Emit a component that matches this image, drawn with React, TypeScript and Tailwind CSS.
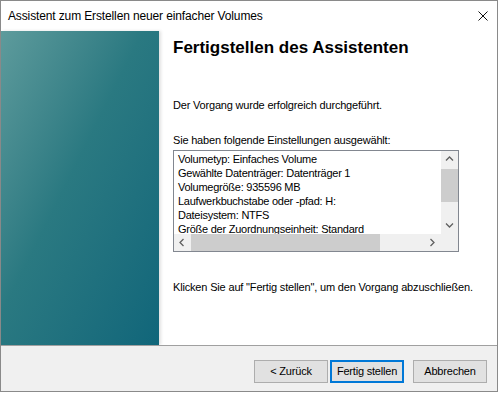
const settings = [
  'Volumetyp: Einfaches Volume',
  'Gewählte Datenträger: Datenträger 1',
  'Volumegröße: 935596 MB',
  'Laufwerkbuchstabe oder -pfad: H:',
  'Dateisystem: NTFS',
  'Größe der Zuordnungseinheit: Standard',
  'Volumebezeichnung: Volume',
];

function Chevron({ dir }: { dir: 'up' | 'down' | 'left' | 'right' }) {
  const paths: Record<string, string> = {
    up: 'M1 5.5 L4.5 2 L8 5.5',
    down: 'M1 2.5 L4.5 6 L8 2.5',
    left: 'M5.5 1 L2 4.5 L5.5 8',
    right: 'M2.5 1 L6 4.5 L2.5 8',
  };
  return (
    <svg width="9" height="9" viewBox="0 0 9 9">
      <path d={paths[dir]} fill="none" stroke="#606060" strokeWidth="1.3" />
    </svg>
  );
}

function Button({ label, primary }: { label: string; primary?: boolean }) {
  return (
    <div
      className={
        'w-[74px] h-[23px] flex items-center justify-center bg-[#e1e1e1] text-[11px] tracking-[-0.2px] text-black ' +
        (primary ? 'border-2 border-[#0078d7]' : 'border border-[#adadad]')
      }
    >
      {label}
    </div>
  );
}

export default function App() {
  return (
    <div className="w-[499px] h-[393px] bg-white font-['Liberation_Sans',Arial,sans-serif] text-black">
      <div className="w-[498px] h-[392px] border border-[#8a8a8a] flex flex-col bg-white">
        {/* title bar */}
        <div className="h-[30px] flex items-center justify-between pl-[7px] pr-[9px] shrink-0">
          <span className="text-[12px] tracking-[-0.13px]">Assistent zum Erstellen neuer einfacher Volumes</span>
          <svg width="10" height="10" viewBox="0 0 10 10">
            <path d="M0.5 0.5 L9.5 9.5 M9.5 0.5 L0.5 9.5" stroke="#111" strokeWidth="1" />
          </svg>
        </div>

        <div className="flex h-[314px] shrink-0">
          <div className="w-[158px] h-full bg-gradient-to-br from-[#5d9b9c] via-[#2a7981] via-45% to-[#10667a] shadow-[2px_0_3px_rgba(0,0,0,0.12)]" />

          <div className="pl-[14px] flex flex-col">
            <div className="mt-[7px] h-[20px] leading-[20px] text-[17px] font-bold">
              Fertigstellen des Assistenten
            </div>
            <div className="mt-[40px] leading-[14px] text-[11px] tracking-[-0.19px]">
              Der Vorgang wurde erfolgreich durchgeführt.
            </div>
            <div className="mt-[21px] leading-[14px] text-[11px] tracking-[-0.19px]">
              Sie haben folgende Einstellungen ausgewählt:
            </div>

            <div className="mt-[3px] w-[286px] h-[102px] border border-[#828790] grid grid-cols-[1fr_17px] grid-rows-[1fr_17px] bg-white">
              <div className="overflow-hidden pl-[4px] pt-[1px] text-[11px] tracking-[-0.25px] leading-[14px] whitespace-nowrap">
                {settings.map((s) => (
                  <div key={s}>{s}</div>
                ))}
              </div>
              <div className="bg-[#f0f0f0] flex flex-col items-center">
                <div className="h-[17px] flex items-center justify-center">
                  <Chevron dir="up" />
                </div>
                <div className="mt-[1px] w-[17px] h-[33px] bg-[#cdcdcd]" />
                <div className="flex-1" />
                <div className="h-[17px] flex items-center justify-center">
                  <Chevron dir="down" />
                </div>
              </div>
              <div className="bg-[#f0f0f0] flex items-center">
                <div className="w-[17px] flex justify-center">
                  <Chevron dir="left" />
                </div>
                <div className="w-[189px] h-full bg-[#cdcdcd]" />
                <div className="flex-1" />
                <div className="w-[17px] flex justify-center">
                  <Chevron dir="right" />
                </div>
              </div>
              <div className="bg-[#f0f0f0]" />
            </div>

            <div className="mt-[28px] leading-[14px] text-[11px] tracking-[-0.17px]">
              Klicken Sie auf "Fertig stellen", um den Vorgang abzuschließen.
            </div>
          </div>
        </div>

        <div className="flex-1 bg-[#f0f0f0] border-t border-[#a0a0a0] flex justify-end items-start pt-[14px] pr-[10px]">
          <Button label="< Zurück" />
          <div className="w-[2px]" />
          <Button label="Fertig stellen" primary />
          <div className="w-[9px]" />
          <Button label="Abbrechen" />
        </div>
      </div>
    </div>
  );
}
